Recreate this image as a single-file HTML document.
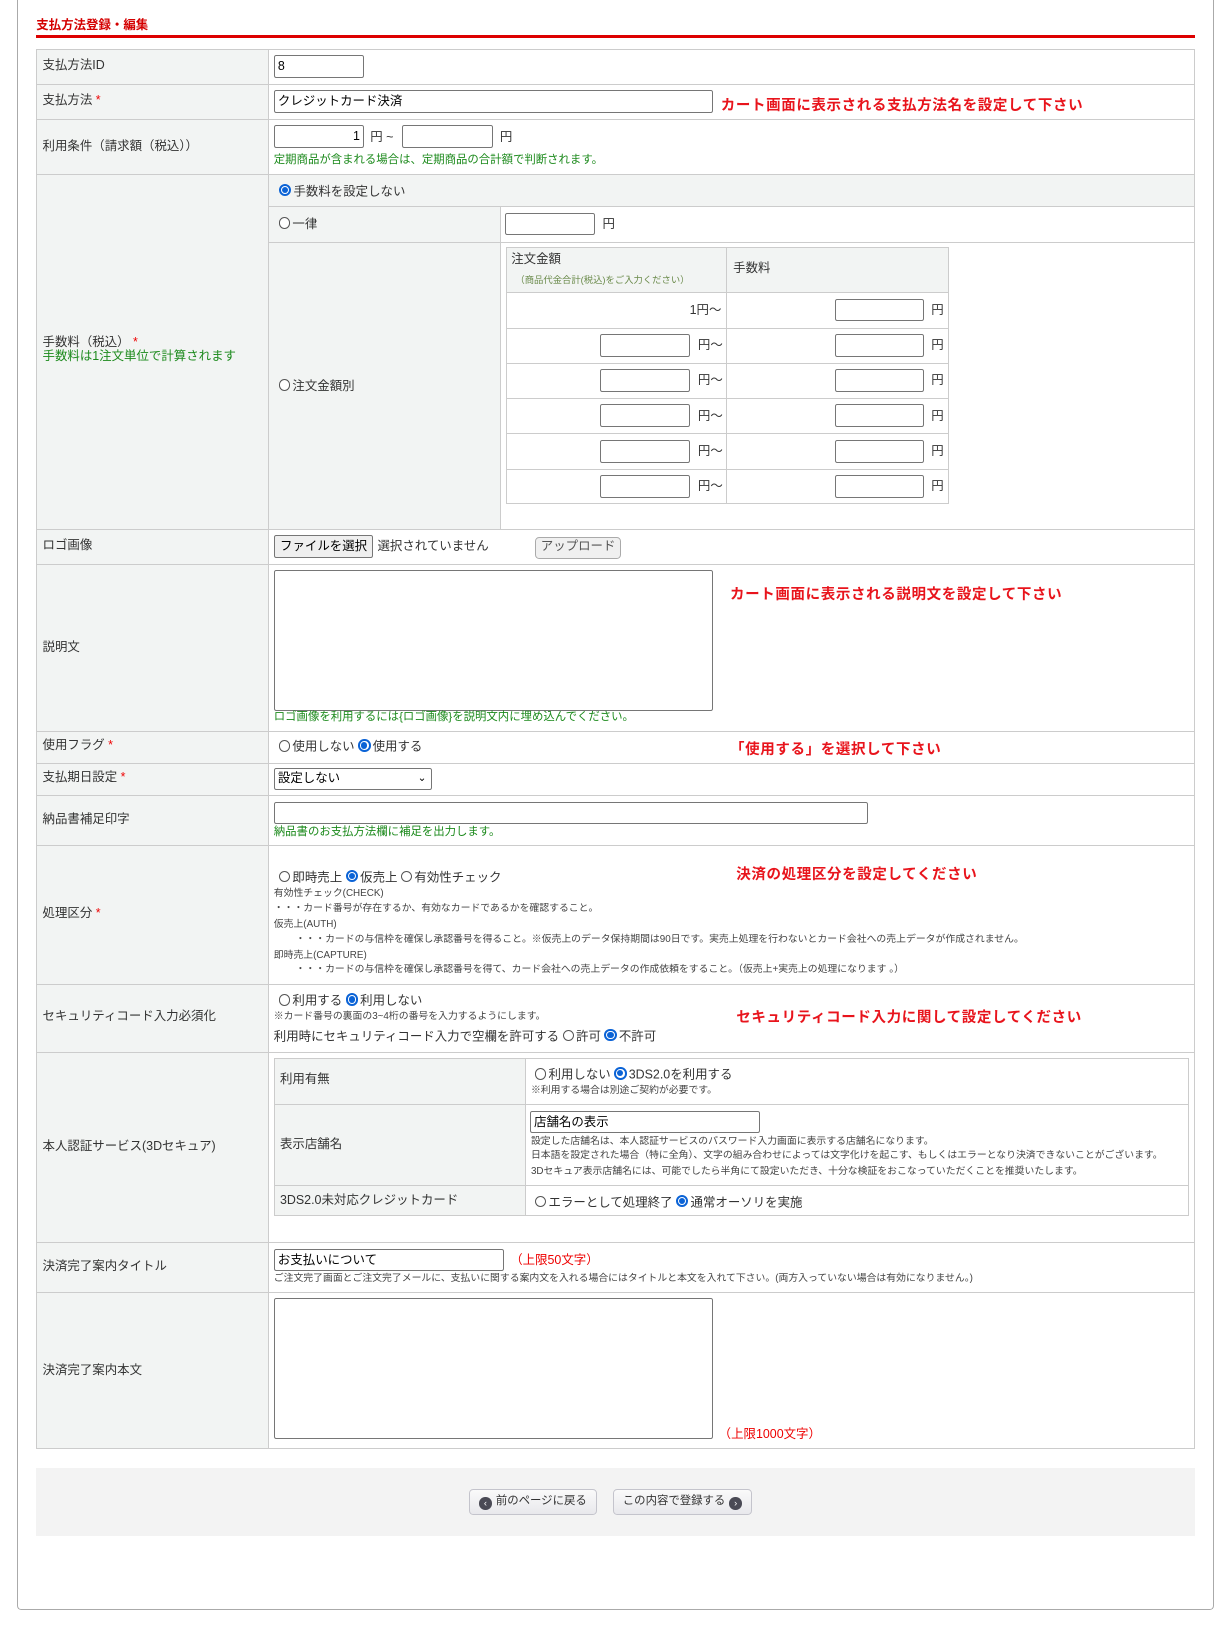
<!DOCTYPE html>
<html><head><meta charset="utf-8">
<style>
html,body{margin:0;padding:0;background:#fff;}
body{width:1232px;height:1627px;overflow:hidden;font-family:"Liberation Sans","Noto Sans CJK JP",sans-serif;color:#333;}
#w{zoom:1.037;position:relative;width:1190px;height:1572px;}
.a{position:absolute;}
.t{font-size:12px;line-height:14px;white-space:nowrap;}
.s{font-size:9.5px;line-height:12px;white-space:nowrap;color:#444;}
.g{color:#1c8a1c;}
.r{color:#e00;}
.h{color:#e8141c;font-weight:bold;font-size:14px;letter-spacing:0.6px;white-space:nowrap;}
.in{position:absolute;border:1px solid #767676;border-radius:2px;background:#fff;box-sizing:border-box;font-size:12px;line-height:20px;padding:0 3px;color:#000;}
.row{position:absolute;left:35px;width:1117px;border-top:1px solid #ccc;box-sizing:border-box;}
.rd{display:inline-block;width:11px;height:11px;border:1px solid #555;border-radius:50%;box-sizing:border-box;vertical-align:-1px;margin-right:2px;background:#fff;}
.on{border:2px solid #0b63d6;position:relative;width:12px;height:12px;}
.on:after{content:"";position:absolute;left:1px;top:1px;width:6px;height:6px;border-radius:50%;background:#0b63d6;}
.gr{background:#f2f4f3;}
</style></head><body><div id="w">
<div class="a" style="left:16px;top:-10px;width:1153px;height:1562px;border:1px solid #aaa;border-top:none;border-radius:0 0 4px 4px;"></div>
<div class="a" style="left:35px;top:14px;color:#d40000;font-weight:bold;font-size:12px;">支払方法登録・編集</div>
<div class="a" style="left:35px;top:34px;width:1117px;height:3px;background:#d00;"></div>

<div class="a" style="left:35px;top:47px;width:1117px;height:1350px;border:1px solid #ccc;box-sizing:border-box;"></div>
<div class="a gr" style="left:36px;top:48px;width:222px;height:1348px;"></div>
<div class="a" style="left:258px;top:47px;width:1px;height:1350px;background:#ccc;"></div>
<div class="row" style="top:81px"></div><div class="row" style="top:115px"></div><div class="row" style="top:168px"></div><div class="row" style="top:510px"></div><div class="row" style="top:544px"></div><div class="row" style="top:705px"></div><div class="row" style="top:736px"></div><div class="row" style="top:767px"></div><div class="row" style="top:815px"></div><div class="row" style="top:949px"></div><div class="row" style="top:1014px"></div><div class="row" style="top:1198px"></div><div class="row" style="top:1246px"></div>

<div class="a t" style="left:41px;top:56px">支払方法ID</div>
<div class="a t" style="left:41px;top:90px">支払方法 <span class="r">*</span></div>
<div class="a t" style="left:41px;top:134px">利用条件（請求額（税込））</div>
<div class="a t" style="left:41px;top:323px">手数料（税込） <span class="r">*</span><br><span class="g">手数料は1注文単位で計算されます</span></div>
<div class="a t" style="left:41px;top:519px">ロゴ画像</div>
<div class="a t" style="left:41px;top:617px">説明文</div>
<div class="a t" style="left:41px;top:712px">使用フラグ <span class="r">*</span></div>
<div class="a t" style="left:41px;top:743px">支払期日設定 <span class="r">*</span></div>
<div class="a t" style="left:41px;top:783px">納品書補足印字</div>
<div class="a t" style="left:41px;top:874px">処理区分 <span class="r">*</span></div>
<div class="a t" style="left:41px;top:973px">セキュリティコード入力必須化</div>
<div class="a t" style="left:41px;top:1098px">本人認証サービス(3Dセキュア)</div>
<div class="a t" style="left:41px;top:1214px">決済完了案内タイトル</div>
<div class="a t" style="left:41px;top:1314px">決済完了案内本文</div>

<div class="in" style="left:264px;top:53px;width:87px;height:22px;">8</div>
<div class="in" style="left:264px;top:87px;width:424px;height:22px;">クレジットカード決済</div>
<div class="a h" style="left:695px;top:91px">カート画面に表示される支払方法名を設定して下さい</div>
<div class="in" style="left:264px;top:121px;width:87px;height:22px;text-align:right;">1</div>
<div class="a t" style="left:357px;top:125px">円 ~</div>
<div class="in" style="left:388px;top:121px;width:87px;height:22px;"></div>
<div class="a t" style="left:482px;top:125px">円</div>
<div class="a t g" style="left:264px;top:148px;font-size:11px">定期商品が含まれる場合は、定期商品の合計額で判断されます。</div>

<div class="a gr" style="left:259px;top:169px;width:892px;height:30px;"></div>
<div class="a gr" style="left:259px;top:200px;width:223px;height:310px;"></div>
<div class="a" style="left:259px;top:199px;width:892px;height:1px;background:#ccc;"></div>
<div class="a" style="left:259px;top:233px;width:892px;height:1px;background:#ccc;"></div>
<div class="a" style="left:482px;top:199px;width:1px;height:311px;background:#ccc;"></div>
<div class="a t" style="left:269px;top:177px"><span class="rd on"></span>手数料を設定しない</div>
<div class="a t" style="left:269px;top:209px"><span class="rd"></span>一律</div>
<div class="in" style="left:487px;top:205px;width:87px;height:22px;"></div>
<div class="a t" style="left:581px;top:209px">円</div>
<div class="a t" style="left:269px;top:365px"><span class="rd"></span>注文金額別</div>
<div class="a" style="left:488px;top:238px;width:427px;height:248px;border:1px solid #ccc;box-sizing:border-box;"></div>
<div class="a gr" style="left:489px;top:239px;width:425px;height:43px;"></div>
<div class="a" style="left:700px;top:238px;width:1px;height:248px;background:#ccc;"></div>
<div class="a t" style="left:493px;top:243px">注文金額</div>
<div class="a s" style="left:497px;top:264px;color:#6a8a4a;font-size:9px">（商品代金合計(税込)をご入力ください）</div>
<div class="a t" style="left:707px;top:252px">手数料</div>
<div class="a" style="left:488px;top:282px;width:427px;height:1px;background:#ccc"></div>
<div class="a" style="left:488px;top:316px;width:427px;height:1px;background:#ccc"></div>
<div class="a" style="left:488px;top:350px;width:427px;height:1px;background:#ccc"></div>
<div class="a" style="left:488px;top:384px;width:427px;height:1px;background:#ccc"></div>
<div class="a" style="left:488px;top:418px;width:427px;height:1px;background:#ccc"></div>
<div class="a" style="left:488px;top:452px;width:427px;height:1px;background:#ccc"></div>
<div class="a t" style="left:665px;top:292px">1円〜</div>
<div class="in" style="left:805px;top:288px;width:86px;height:22px"></div><div class="a t" style="left:898px;top:292px">円</div>
<div class="in" style="left:579px;top:322px;width:86px;height:22px"></div><div class="a t" style="left:673px;top:326px">円〜</div><div class="in" style="left:805px;top:322px;width:86px;height:22px"></div><div class="a t" style="left:898px;top:326px">円</div>
<div class="in" style="left:579px;top:356px;width:86px;height:22px"></div><div class="a t" style="left:673px;top:360px">円〜</div><div class="in" style="left:805px;top:356px;width:86px;height:22px"></div><div class="a t" style="left:898px;top:360px">円</div>
<div class="in" style="left:579px;top:390px;width:86px;height:22px"></div><div class="a t" style="left:673px;top:394px">円〜</div><div class="in" style="left:805px;top:390px;width:86px;height:22px"></div><div class="a t" style="left:898px;top:394px">円</div>
<div class="in" style="left:579px;top:424px;width:86px;height:22px"></div><div class="a t" style="left:673px;top:428px">円〜</div><div class="in" style="left:805px;top:424px;width:86px;height:22px"></div><div class="a t" style="left:898px;top:428px">円</div>
<div class="in" style="left:579px;top:458px;width:86px;height:22px"></div><div class="a t" style="left:673px;top:462px">円〜</div><div class="in" style="left:805px;top:458px;width:86px;height:22px"></div><div class="a t" style="left:898px;top:462px">円</div>

<div class="in" style="left:264px;top:516px;width:96px;height:22px;background:#efefef;text-align:center;padding:0;">ファイルを選択</div>
<div class="a t" style="left:364px;top:520px">選択されていません</div>
<div class="in" style="left:516px;top:518px;width:83px;height:21px;background:#f0f0f0;border-color:#aaa;border-radius:4px;text-align:center;padding:0;line-height:17px;color:#555">アップロード</div>

<div class="in" style="left:264px;top:550px;width:424px;height:136px;"></div>
<div class="a h" style="left:704px;top:562px">カート画面に表示される説明文を設定して下さい</div>
<div class="a t g" style="left:264px;top:685px;font-size:11px">ロゴ画像を利用するには{ロゴ画像}を説明文内に埋め込んでください。</div>

<div class="a t" style="left:269px;top:713px"><span class="rd"></span>使用しない <span class="rd on"></span>使用する</div>
<div class="a h" style="left:704px;top:712px">「使用する」を選択して下さい</div>

<div class="in" style="left:264px;top:741px;width:153px;height:21px;line-height:19px;">設定しない<span style="position:absolute;right:5px;top:0;font-size:10px">&#8964;</span></div>

<div class="in" style="left:264px;top:773px;width:573px;height:22px;"></div>
<div class="a t g" style="left:264px;top:796px;font-size:11px">納品書のお支払方法欄に補足を出力します。</div>

<div class="a t" style="left:269px;top:839px"><span class="rd"></span>即時売上 <span class="rd on"></span>仮売上 <span class="rd"></span>有効性チェック</div>
<div class="a h" style="left:710px;top:832px">決済の処理区分を設定してください</div>
<div class="a s" style="left:264px;top:856px">有効性チェック(CHECK)</div>
<div class="a s" style="left:264px;top:871px">・・・カード番号が存在するか、有効なカードであるかを確認すること。</div>
<div class="a s" style="left:264px;top:886px">仮売上(AUTH)</div>
<div class="a s" style="left:285px;top:901px">・・・カードの与信枠を確保し承認番号を得ること。※仮売上のデータ保持期間は90日です。実売上処理を行わないとカード会社への売上データが作成されません。</div>
<div class="a s" style="left:264px;top:916px">即時売上(CAPTURE)</div>
<div class="a s" style="left:285px;top:930px">・・・カードの与信枠を確保し承認番号を得て、カード会社への売上データの作成依頼をすること。（仮売上+実売上の処理になります 。）</div>

<div class="a t" style="left:269px;top:958px"><span class="rd"></span>利用する <span class="rd on"></span>利用しない</div>
<div class="a s" style="left:264px;top:975px">※カード番号の裏面の3~4桁の番号を入力するようにします。</div>
<div class="a t" style="left:264px;top:992px">利用時にセキュリティコード入力で空欄を許可する <span class="rd"></span>許可 <span class="rd on"></span>不許可</div>
<div class="a h" style="left:710px;top:970px">セキュリティコード入力に関して設定してください</div>

<div class="a" style="left:264px;top:1020px;width:883px;height:153px;border:1px solid #ccc;box-sizing:border-box;"></div>
<div class="a gr" style="left:265px;top:1021px;width:241px;height:151px;"></div>
<div class="a" style="left:506px;top:1020px;width:1px;height:153px;background:#ccc"></div>
<div class="a" style="left:264px;top:1065px;width:883px;height:1px;background:#ccc"></div>
<div class="a" style="left:264px;top:1143px;width:883px;height:1px;background:#ccc"></div>
<div class="a t" style="left:270px;top:1034px">利用有無</div>
<div class="a t" style="left:270px;top:1096px">表示店舗名</div>
<div class="a t" style="left:270px;top:1150px">3DS2.0未対応クレジットカード</div>
<div class="a t" style="left:516px;top:1029px"><span class="rd"></span>利用しない <span class="rd on"></span>3DS2.0を利用する</div>
<div class="a s" style="left:512px;top:1046px">※利用する場合は別途ご契約が必要です。</div>
<div class="in" style="left:511px;top:1071px;width:222px;height:22px;">店舗名の表示</div>
<div class="a s" style="left:512px;top:1095px">設定した店舗名は、本人認証サービスのパスワード入力画面に表示する店舗名になります。</div>
<div class="a s" style="left:512px;top:1109px">日本語を設定された場合（特に全角）、文字の組み合わせによっては文字化けを起こす、もしくはエラーとなり決済できないことがございます。</div>
<div class="a s" style="left:512px;top:1124px">3Dセキュア表示店舗名には、可能でしたら半角にて設定いただき、十分な検証をおこなっていただくことを推奨いたします。</div>
<div class="a t" style="left:516px;top:1152px"><span class="rd"></span>エラーとして処理終了 <span class="rd on"></span>通常オーソリを実施</div>

<div class="in" style="left:264px;top:1204px;width:222px;height:22px;">お支払いについて</div>
<div class="a t r" style="left:492px;top:1208px">（上限50文字）</div>
<div class="a s" style="left:264px;top:1228px">ご注文完了画面とご注文完了メールに、支払いに関する案内文を入れる場合にはタイトルと本文を入れて下さい。(両方入っていない場合は有効になりません。)</div>

<div class="in" style="left:264px;top:1252px;width:424px;height:136px;"></div>
<div class="a t r" style="left:693px;top:1376px">（上限1000文字）</div>

<div class="a" style="left:35px;top:1416px;width:1117px;height:65px;background:#f3f3f3;"></div>
<div class="a t" style="left:452px;top:1436px;width:124px;height:25px;border:1px solid #c4c4cc;border-radius:4px;box-sizing:border-box;background:linear-gradient(#fafafa,#e8e8ec);line-height:23px;font-size:11px;color:#333;text-align:center;"><span style="display:inline-block;width:12px;height:12px;border-radius:50%;background:#4a4a55;color:#fff;font-size:9px;line-height:12px;vertical-align:-2px;margin-right:4px;">&#8249;</span>前のページに戻る</div>
<div class="a t" style="left:591px;top:1436px;width:134px;height:25px;border:1px solid #c4c4cc;border-radius:4px;box-sizing:border-box;background:linear-gradient(#fafafa,#e8e8ec);line-height:23px;font-size:11px;color:#333;text-align:center;">この内容で登録する<span style="display:inline-block;width:12px;height:12px;border-radius:50%;background:#4a4a55;color:#fff;font-size:9px;line-height:12px;vertical-align:-2px;margin-left:4px;">&#8250;</span></div>
</div></body></html>
